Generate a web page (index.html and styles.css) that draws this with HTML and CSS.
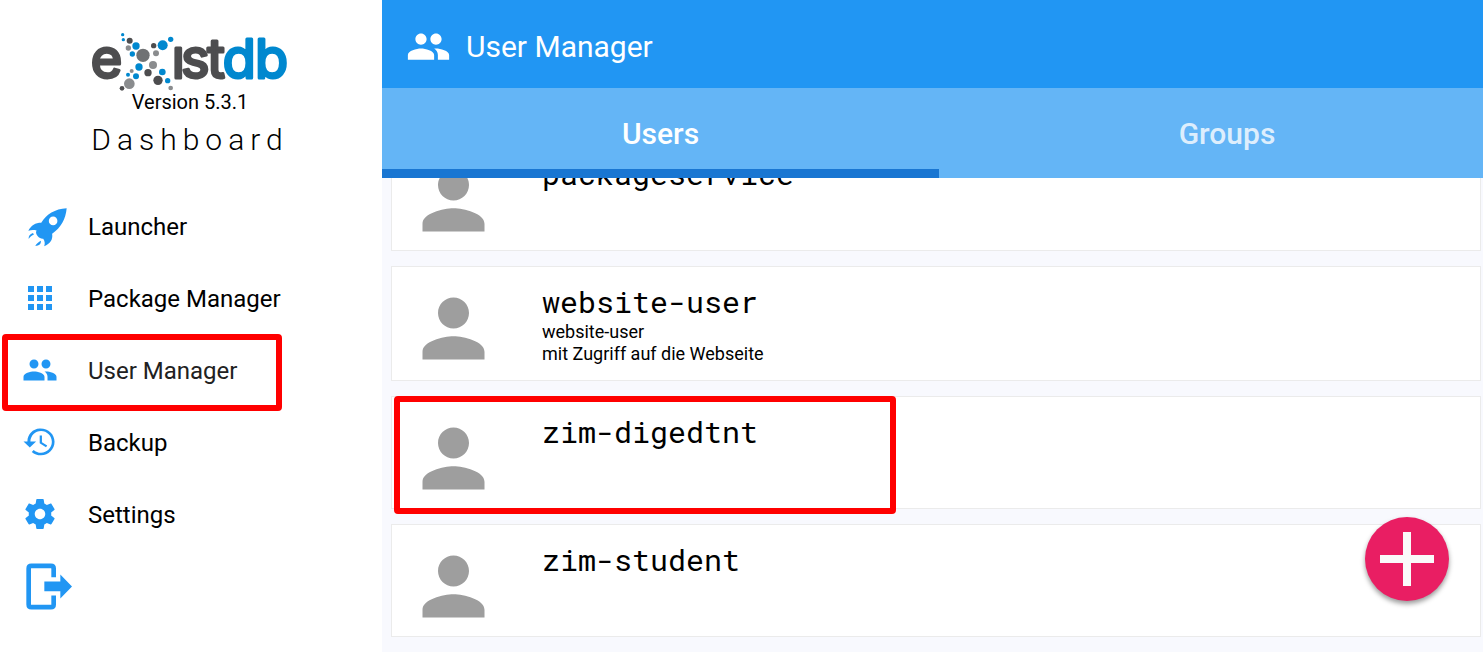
FILE: index.html
```html
<!DOCTYPE html>
<html lang="en">
<head>
<meta charset="utf-8">
<title>User Manager</title>
<link rel="stylesheet" href="styles.css">
</head>
<body>
<svg width="0" height="0" class="sprite" aria-hidden="true">
  <symbol id="people" viewBox="0 0 24 24"><path d="M16 11c1.66 0 2.99-1.34 2.99-3S17.66 5 16 5c-1.66 0-3 1.34-3 3s1.34 3 3 3zm-8 0c1.66 0 2.99-1.34 2.99-3S9.66 5 8 5C6.34 5 5 6.34 5 8s1.34 3 3 3zm0 2c-2.33 0-7 1.17-7 3.5V19h14v-2.5c0-2.33-4.67-3.5-7-3.5zm8 0c-.29 0-.62.02-.97.05 1.16.84 1.97 1.97 1.97 3.45V19h6v-2.5c0-2.33-4.67-3.5-7-3.5z"/></symbol>
  <symbol id="person" viewBox="0 0 24 24"><path d="M12 12c2.21 0 4-1.79 4-4s-1.79-4-4-4-4 1.790-4 4 1.790 4 4 4zm0 2c-2.670 0-8 1.340-8 4v2h16v-2c0-2.660-5.330-4-8-4z"/></symbol>
</svg>
<div class="app">
  <aside class="sidebar">
    <div class="brand">
      <svg class="logo" viewBox="30 15 600 180" role="img" aria-label="eXistdb">
        <g class="dark">
          <text x="32" y="160">e</text><text x="275" y="160">ı</text><text x="303" y="160">s</text><text x="382" y="160">t</text>
          <circle cx="149" cy="47" r="9"/><circle cx="221" cy="62" r="8"/><circle cx="204" cy="143" r="11"/><circle cx="234" cy="166" r="14"/><circle cx="126" cy="190" r="7"/>
        </g>
        <g class="blue">
          <text x="428" y="160">d</text><text x="525" y="160">b</text>
          <circle cx="128" cy="29" r="5"/><circle cx="130" cy="44" r="5"/><circle cx="168" cy="63" r="11"/><circle cx="157" cy="87" r="8"/><circle cx="248" cy="61" r="15"/><circle cx="272" cy="43" r="8"/><circle cx="177" cy="126" r="11"/><circle cx="144" cy="149" r="6"/><circle cx="168" cy="154" r="9"/><circle cx="247" cy="141" r="10"/><circle cx="263" cy="167" r="8"/>
        </g>
        <g class="gray">
          <circle cx="189" cy="91" r="20" class="mid"/><circle cx="145" cy="69" r="8"/><circle cx="228" cy="85" r="9"/><circle cx="219" cy="120" r="12"/><circle cx="155" cy="138" r="6"/><circle cx="148" cy="176" r="16"/><circle cx="272" cy="189" r="7"/>
        </g>
      </svg>
      <div class="version">Version 5.3.1</div>
      <div class="product">Dashboard</div>
    </div>
    <nav class="nav">
      <a href="#launcher" class="nav-item"><span class="nav-icon"><svg class="rocket" viewBox="84 39 118 118"><path fill-rule="evenodd" d="M201 40C165 42 140 58 124 84C106 84 94 92 85 108C94 105 102 105 110 107C107 111 108 118 113 124C118 130 125 133 130 132C135 139 136 147 133 155C151 147 160 135 157 117C184 98 198 74 201 40ZM160 65a13 13 0 1 1 0 26a13 13 0 1 1 0-26ZM86 133C85 124 90 118 99 115L102 119C96 121 90 126 86 133ZM106 154C110 147 116 141 123 138C124 147 118 153 106 154Z"/></svg></span>Launcher</a>
      <a href="#packages" class="nav-item"><span class="nav-icon"><svg class="icon" viewBox="0 0 24 24"><path d="M4 8h4V4H4v4zm6 12h4v-4h-4v4zm-6 0h4v-4H4v4zm0-6h4v-4H4v4zm6 0h4v-4h-4v4zm6-10v4h4V4h-4zm-6 4h4V4h-4v4zm6 6h4v-4h-4v4zm0 6h4v-4h-4v4z"/></svg></span>Package Manager</a>
      <a href="#users" class="nav-item active"><span class="nav-icon"><svg class="icon"><use href="#people"/></svg></span>User Manager<span class="marker marker-nav"></span></a>
      <a href="#backup" class="nav-item"><span class="nav-icon"><svg class="icon" viewBox="0 0 24 24"><path d="M11.900 3c-4.700.2-8.200 3.900-8.300 8.600H1l4.200 4L9.400 11.600H5.600c.1-3.900 3.200-7 7.100-7 4 0 7.200 3.300 7.200 7.300s-3.200 7.300-7.200 7.300c-1.900 0-3.600-.7-4.900-1.900l-1.300 1.300c1.600 1.500 3.800 2.300 6.200 2.300 5 0 9-4 9-9s-4-9-9.800-8.900zM11.800 7.600v5.300l4.200 2.600.8-1.200-3.500-2.100V7.600z"/></svg></span>Backup</a>
      <a href="#settings" class="nav-item"><span class="nav-icon"><svg class="icon" viewBox="0 0 24 24"><path d="M19.430 12.980c.04-.32.070-.64.070-.98s-.03-.66-.07-.98l2.110-1.650c.19-.15.240-.42.120-.64l-2-3.460c-.12-.22-.39-.3-.61-.22l-2.490 1c-.52-.4-1.080-.73-1.690-.98l-.38-2.650C14.460 2.180 14.250 2 14 2h-4c-.25 0-.46.180-.49.420l-.38 2.650c-.61.250-1.170.590-1.690.980l-2.490-1c-.23-.09-.49 0-.61.220l-2 3.460c-.13.220-.07.490.120.640l2.110 1.650c-.04.320-.07.650-.07.980s.03.660.070.980l-2.110 1.650c-.19.150-.24.420-.12.640l2 3.460c.12.220.390.300.610.220l2.490-1c.52.400 1.080.730 1.690.980l.38 2.650c.03.240.240.420.490.420h4c.25 0 .46-.18.490-.42l.38-2.650c.61-.25 1.170-.59 1.690-.98l2.490 1c.23.090.490 0 .610-.22l2-3.460c.12-.22.070-.49-.12-.64l-2.110-1.650zM12 15.500c-1.930 0-3.500-1.570-3.500-3.500s1.570-3.500 3.500-3.500 3.500 1.570 3.500 3.500-1.570 3.500-3.500 3.500z"/></svg></span>Settings</a>
      <button type="button" class="nav-item" aria-label="Log out"><svg class="logout" viewBox="78 488 138 140"><path d="M161 530V504Q161 496 153 496H94Q86 496 86 504V612Q86 620 94 620H153Q161 620 161 612V585" class="door"/><path d="M133 543h48v-21l35 36-35 36v-22h-48z"/></svg></button>
    </nav>
  </aside>
  <main class="main">
    <header class="topbar"><svg class="topbar-icon"><use href="#people"/></svg><h1>User Manager</h1></header>
    <div class="tabs" role="tablist">
      <button type="button" role="tab" aria-selected="true" class="tab selected">Users</button>
      <button type="button" role="tab" aria-selected="false" class="tab groups">Groups</button>
    </div>
    <section class="list">
      <article class="card"><svg class="avatar"><use href="#person"/></svg><div class="details"><h2>packageservice</h2></div></article>
      <article class="card"><svg class="avatar"><use href="#person"/></svg><div class="details"><h2>website-user</h2><p>website-user</p><p>mit Zugriff auf die Webseite</p></div></article>
      <article class="card"><svg class="avatar"><use href="#person"/></svg><div class="details"><h2>zim-digedtnt</h2></div><span class="marker marker-card"></span></article>
      <article class="card"><svg class="avatar"><use href="#person"/></svg><div class="details"><h2>zim-student</h2></div></article>
    </section>
  </main>
</div>
<button type="button" class="fab" aria-label="Add user"><svg viewBox="0 0 54 54"><path d="M23 0h8v23h23v8H31v23h-8V31H0v-8h23z"/></svg></button>
</body>
</html>
```
FILE: styles.css
```css
* { box-sizing: border-box; }
body { margin: 0; font-family: Roboto, sans-serif; color: #000; background: #fff; }
h1, h2, p { margin: 0; font-weight: 400; }
button { border: 0; background: none; font: inherit; cursor: pointer; }
svg { display: block; flex: none; }
.sprite { position: absolute; }
.app { display: grid; grid-template-columns: 382px 1fr; height: 100vh; }

.sidebar { display: flex; flex-direction: column; }
.brand { display: flex; flex-direction: column; align-items: center; padding: 30px 2px 33px 0; }
.logo { width: 200px; height: 60px; overflow: visible; }
.logo text { font-family: Inter, sans-serif; font-size: 162px; stroke-width: 9px; stroke-linejoin: round; }
.dark { fill: #4d4d4f; }
.dark text { stroke: #4d4d4f; }
.blue { fill: #0088cf; }
.blue text { stroke: #0088cf; }
.gray { fill: #8a8c8e; }
.mid { fill: #707274; }
.version { font-size: 20px; line-height: 24px; }
.product { margin-top: 8px; font-size: 30px; line-height: 36px; font-weight: 300; letter-spacing: 6px; }

.nav { display: flex; flex-direction: column; }
.nav-item { position: relative; display: flex; align-items: center; height: 72px; padding: 0; font-size: 24px; color: #000; text-decoration: none; }
.nav-item.active { color: #212121; }
.nav-icon { width: 88px; padding-left: 22px; }
.nav svg { fill: #2196f3; }
.icon { width: 36px; height: 36px; margin-bottom: 2px; }
.rocket { width: 39px; height: 39px; margin-left: 6px; }
.logout { width: 46px; height: 47px; margin: 0 0 2px 26px; }
.nav .door { fill: none; stroke: #2196f3; stroke-width: 14px; }

.main { display: flex; flex-direction: column; min-width: 0; min-height: 0; background: #f8f9fe; }
.topbar { flex: none; display: flex; align-items: center; gap: 15px; height: 88px; padding: 4px 24px 0; background: #2196f3; color: #fff; }
.topbar h1 { font-size: 30px; }
.topbar-icon { width: 45px; height: 45px; fill: #fff; }
.tabs { flex: none; display: grid; grid-template-columns: 557fr 544fr; height: 90px; background: #64b5f6; }
.tab { padding: 9px 0 0; border-bottom: 9px solid transparent; font-size: 30px; font-weight: 500; color: rgba(255, 255, 255, 0.8); }
.tab.selected { color: #fff; border-color: #1976d2; }
.tab.groups { padding-left: 32px; }

.list { flex: 1; min-height: 0; overflow: hidden; display: flex; flex-direction: column; justify-content: flex-end; gap: 15px; padding: 0 2px 15px 9px; }
.card { position: relative; flex: none; display: flex; align-items: flex-start; gap: 42px; padding: 15px 15px 3px; background: #fff; border: 1px solid #ebebeb; }
.avatar { width: 93px; height: 93px; fill: #9e9e9e; }
.details { padding: 1px 0 12px; }
.details h2 { font-family: "Roboto Mono", "DejaVu Sans Mono", monospace; font-size: 30px; line-height: 38px; }
.details p { font-size: 18px; line-height: 22px; }

.marker { position: absolute; top: -1px; left: 2px; border: 6px solid #f00; border-radius: 4px; pointer-events: none; }
.marker-nav { width: 280px; height: 77px; }
.marker-card { width: 502px; height: 118px; z-index: 1; }

.fab { position: fixed; right: 34px; bottom: 51px; z-index: 2; display: flex; align-items: center; justify-content: center; width: 84px; height: 84px; padding: 0; border-radius: 50%; background: #e91e63; box-shadow: 0 3px 5px rgba(0, 0, 0, 0.4); }
.fab svg { width: 54px; height: 54px; fill: #fafafa; }
```
